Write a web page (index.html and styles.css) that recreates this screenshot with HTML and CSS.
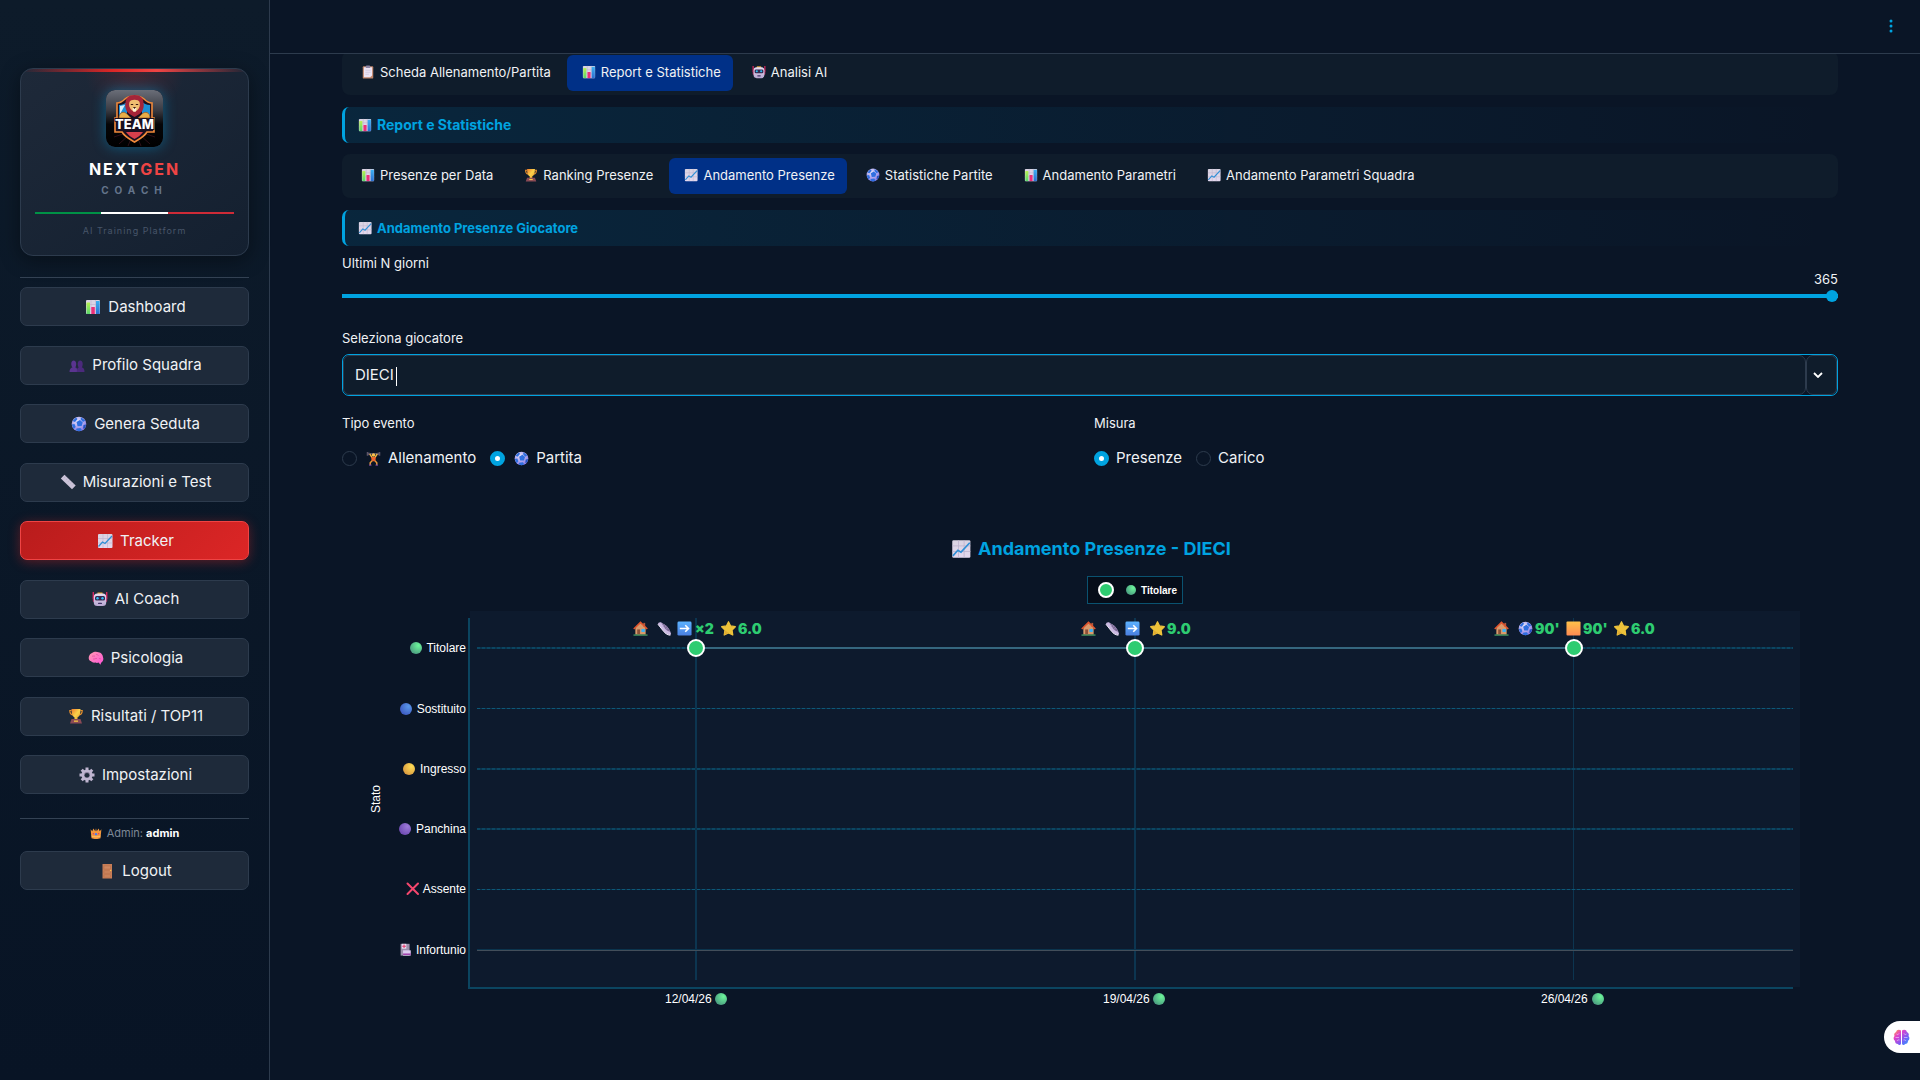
FILE: index.html
```html
<!DOCTYPE html>
<html lang="it">
<head>
    <meta charset="UTF-8">
    <meta name="viewport" content="width=device-width, initial-scale=1.0">
    <title>NextGen Coach - Tracker</title>
    <link rel="stylesheet" href="styles.css">
</head>
<body>

<!-- Icon sprite -->
<svg class="sprite" aria-hidden="true">
    <defs>
        <linearGradient id="g-green-bar" x1="0" y1="0" x2="0" y2="1"><stop offset="0" stop-color="#b6f24f"/><stop offset="1" stop-color="#57d66b"/></linearGradient>
        <linearGradient id="g-blue-bar" x1="0" y1="0" x2="0" y2="1"><stop offset="0" stop-color="#3ab0f2"/><stop offset="1" stop-color="#2c6fd0"/></linearGradient>
        <linearGradient id="g-paper" x1="0" y1="0" x2="0" y2="1"><stop offset="0" stop-color="#d9d3e2"/><stop offset="1" stop-color="#e4d8ee"/></linearGradient>
        <linearGradient id="g-gold" x1="0" y1="0" x2="1" y2="1"><stop offset="0" stop-color="#f07a2c"/><stop offset=".5" stop-color="#fad24a"/><stop offset="1" stop-color="#e8962e"/></linearGradient>
        <linearGradient id="g-orange" x1="0" y1="0" x2="0" y2="1"><stop offset="0" stop-color="#ffc24a"/><stop offset="1" stop-color="#ff8a52"/></linearGradient>
        <linearGradient id="g-arrow" x1="0" y1="0" x2="0" y2="1"><stop offset="0" stop-color="#5cb2ff"/><stop offset="1" stop-color="#4a7fe0"/></linearGradient>
        <linearGradient id="g-brain" x1="0" y1="0" x2="1" y2="1"><stop offset="0" stop-color="#ff9ab0"/><stop offset="1" stop-color="#ff52d8"/></linearGradient>
        <linearGradient id="g-ai" x1="0" y1="0" x2="1" y2="1"><stop offset="0" stop-color="#ffb02e"/><stop offset=".3" stop-color="#e640c8"/><stop offset=".65" stop-color="#7a5cf5"/><stop offset="1" stop-color="#22a6ff"/></linearGradient>
        <linearGradient id="g-head" x1="0" y1="0" x2="0" y2="1"><stop offset="0" stop-color="#e6dcf2"/><stop offset="1" stop-color="#b8a6d0"/></linearGradient>
        <radialGradient id="g-ball" cx=".4" cy=".3" r=".8"><stop offset="0" stop-color="#e4e2fa"/><stop offset="1" stop-color="#7c6ce0"/></radialGradient>
        <radialGradient id="g-dot-green" cx=".7" cy=".3" r=".8"><stop offset="0" stop-color="#6cf59a"/><stop offset="1" stop-color="#4a9a80"/></radialGradient>
        <radialGradient id="g-dot-blue" cx=".7" cy=".3" r=".8"><stop offset="0" stop-color="#5a98e8"/><stop offset="1" stop-color="#3c58c0"/></radialGradient>
        <radialGradient id="g-dot-yellow" cx=".7" cy=".3" r=".8"><stop offset="0" stop-color="#ffdc55"/><stop offset="1" stop-color="#d89840"/></radialGradient>
        <radialGradient id="g-dot-purple" cx=".7" cy=".3" r=".8"><stop offset="0" stop-color="#9c7ad8"/><stop offset="1" stop-color="#6c48b0"/></radialGradient>
    </defs>

    <symbol id="i-bars" viewBox="0 0 16 16">
        <rect x="1" y="1" width="14" height="14" rx="1" fill="url(#g-paper)"/>
        <path d="M1 5.5h14M1 10h14M6 1v14M10.5 1v14" stroke="#bcb2cc" stroke-width=".6"/>
        <rect x="1.5" y="3.5" width="3.5" height="11.5" fill="url(#g-green-bar)"/>
        <rect x="6.3" y="8" width="3.5" height="7" fill="#ec2f78"/>
        <rect x="11" y="2" width="3.7" height="13" fill="url(#g-blue-bar)"/>
    </symbol>
    <symbol id="i-trend" viewBox="0 0 16 16">
        <rect x="1" y="1" width="14.500" height="14" rx="1" fill="url(#g-paper)"/>
        <path d="M1 5.500h14.500M1 10h14.500M6 1v14M10.500 1v14" stroke="#bcb2cc" stroke-width=".6"/>
        <path d="M1.500 13.500L5.500 9l2.500 1.500 7-7.500" fill="none" stroke="#2f8fd6" stroke-width="1.300"/>
    </symbol>
    <symbol id="i-people" viewBox="0 0 16 16">
        <path d="M.5 15c0-3 1.500-4.500 3-4.500C1.500 8 2 3.500 4.700 3.500S8 8 6.300 10.500C8 10.500 8.200 12 8.200 15z" fill="#5a3490"/>
        <path d="M7.800 15c0-3 .7-4.500 2-4.500C8 8 8.500 3.500 11.200 3.500S14.500 8 12.800 10.500c1.700 0 2.700 1.500 2.700 4.500z" fill="#4b2a7c"/>
    </symbol>
    <symbol id="i-ball" viewBox="0 0 16 16">
        <circle cx="8" cy="8" r="7.300" fill="url(#g-ball)"/>
        <path d="M5.500 6l3.500-2 2.800 2.500-1.200 3.500-4 .2zM1.500 5L5 1.500l1.500 1.500L4 6zM10 1.200l4.300 3.300L12 6 9.700 3.500zM.8 8.500L3.500 8l1.200 3-2 2zM5.500 12.500l4-.5 1.500 2.300L8 15.300l-3-1z" fill="#2f6fe0"/>
        <path d="M12.500 9l2.600-.5-1 3.500-2.100.8z" fill="#2453c0"/>
    </symbol>
    <symbol id="i-ruler" viewBox="0 0 16 16">
        <path d="M.8 4.500L4.500.8 15.700 11.500 12 15.300z" fill="#cbc3d8"/>
        <path d="M5.500 2.500L4.300 3.700M7.500 4.500L6.300 5.700M9.500 6.400L8.300 7.600M11.500 8.300l-1.200 1.200M13.500 10.200l-1.200 1.200" stroke="#a79fb8" stroke-width=".6"/>
    </symbol>
    <symbol id="i-robot" viewBox="0 0 16 16">
        <path d="M1.300 1v7M14.700 1v7" stroke="#d8245e" stroke-width="1.400"/>
        <path d="M5.500 1.500h5v2h-5z" fill="#e8a832"/>
        <rect x="0.800" y="7" width="14.400" height="4" rx="1" fill="#b02c64"/>
        <rect x="1.800" y="2.500" width="12.400" height="12.500" rx="3.500" fill="url(#g-head)"/>
        <rect x="3" y="5" width="10" height="4.500" rx="1.500" fill="#35284e"/>
        <circle cx="5.500" cy="7.200" r="1.200" fill="#2ec0f5"/><circle cx="10.500" cy="7.200" r="1.200" fill="#2ec0f5"/>
        <rect x="6" y="11.700" width="4" height="1.300" rx=".6" fill="#45366a"/>
    </symbol>
    <symbol id="i-brain" viewBox="0 0 16 16">
        <path d="M1 9.500C.2 7 1.500 4 4 3c2-1.700 5-1.500 6.500-.7C13 2.500 15 5 15 7.300c.8 1.700.2 4-1.200 4.700-.5 1-1 1-1.300 2.800l-2-2.300c-1 .6-2.200.5-3 0C5.500 13 3 12 3 11 2 11 1.200 10.400 1 9.500z" fill="url(#g-brain)"/>
        <path d="M4 6.500c1-1 2 0 3-.5M8 4c.5 1 2 .5 2.500 1.500M5 9c1.500.5 2.500-1 4-.5M11 8c.5 1 1.500.5 2 1.200" fill="none" stroke="#e0489c" stroke-width=".7"/>
    </symbol>
    <symbol id="i-trophy" viewBox="0 0 16 16">
        <path d="M3.500 2.500H1.800c0 3 1 4 3 4.500M12.500 2.500h1.700c0 3-1 4-3 4.500" fill="none" stroke="#e8902c" stroke-width="1.200"/>
        <path d="M3.500 1h9c0 5-1 7.500-3 8.300V12h-3V9.300C4.500 8.500 3.500 6 3.500 1z" fill="url(#g-gold)"/>
        <path d="M3.500 11h9l1.500 4.500H2z" fill="#8a4a56"/>
        <rect x="6" y="12.500" width="4" height="1.300" fill="#f5c542"/>
    </symbol>
    <symbol id="i-gear" viewBox="0 0 16 16">
        <path d="M8 .5v15M.5 8h15M2.700 2.700l10.600 10.600M13.300 2.700L2.700 13.300" stroke="#bfb5d0" stroke-width="3"/>
        <circle cx="8" cy="8" r="5.600" fill="#bfb5d0"/>
        <circle cx="8" cy="8" r="3" fill="#8a7f9c"/>
        <circle cx="8" cy="8.200" r="2.300" fill="#1f2a3a"/>
    </symbol>
    <symbol id="i-crown" viewBox="0 0 16 16">
        <path d="M.8 3l2.200 2.500L4.500 2 7 5.500 8 1.500l1 4L11.500 2 13 5.500 15.200 3l-1.200 12c-3 1.200-9 1.200-12 0z" fill="#f5983c"/>
        <path d="M2 12c3 1.500 9 1.500 12 0" fill="none" stroke="#ffd27a"/>
        <circle cx="8" cy="9.500" r="1.600" fill="#4a78f0"/><circle cx="4.500" cy="9" r="1" fill="#e0386c"/><circle cx="11.500" cy="9" r="1" fill="#e0386c"/>
    </symbol>
    <symbol id="i-door" viewBox="0 0 16 16">
        <rect x="3.500" y="1" width="9.500" height="14.500" fill="#c87d56"/>
        <path d="M5 3h6.500v3H5zM5 8h6.500v2H5zM5 12h6.500v2H5z" fill="#d08860" stroke="#b56f4a" stroke-width=".5"/>
        <circle cx="11.600" cy="7.500" r=".8" fill="#f5c04a"/>
    </symbol>
    <symbol id="i-clipboard" viewBox="0 0 16 16">
        <rect x="2" y="1.500" width="12" height="14" rx="1" fill="#c08468"/>
        <path d="M3.300 2.500h9.400v9.500L10.500 14H3.300z" fill="#ece4f4"/>
        <rect x="5.500" y=".5" width="5" height="3" rx="1" fill="#8c84a4"/>
        <path d="M5 6h6M5 8.300h6M5 10.600h4" stroke="#c9c0d8" stroke-width=".8"/>
    </symbol>
    <symbol id="i-lifter" viewBox="0 0 16 16">
        <path d="M1 3h14" stroke="#8a8296" stroke-width=".9"/>
        <path d="M1.500 1v4M3 1.500v3M13 1.500v3M14.500 1v4" stroke="#5c5468" stroke-width="1.400"/>
        <path d="M4 3l2.500 4M12 3L9.500 7" stroke="#f5b942" stroke-width="1.500"/>
        <circle cx="8" cy="4.300" r="1.900" fill="#f7c04c"/>
        <path d="M5.500 6.500h5L10 11H6z" fill="#f0662c"/>
        <path d="M6.500 10.500L4.500 12.500V15M9.500 10.500l2 2V15" fill="none" stroke="#e89a3a" stroke-width="1.600"/>
        <path d="M3.300 15h2.500M10.200 15h2.500" stroke="#7a4aa0" stroke-width="1.200"/>
    </symbol>
    <symbol id="i-house" viewBox="0 0 16 16">
        <path d="M2.500 7L8 2l5.500 5v7.500h-11z" fill="#d99a6c"/>
        <path d="M11 2h2v4h-2z" fill="#b0583c"/>
        <path d="M.8 8.500L8 1.500l7.200 7" fill="none" stroke="#e0552e" stroke-width="1.700"/>
        <rect x="4.500" y="9" width="3" height="5.500" fill="#8c5038"/>
        <rect x="9" y="8.500" width="3.600" height="3.200" fill="#39b2f5"/>
        <path d="M.5 15h15" stroke="#4fae6a" stroke-width="1.200"/>
    </symbol>
    <symbol id="i-shoe" viewBox="0 0 16 16">
        <path d="M1 3.500C1 1.500 3 .8 4.500 1.500L9 4.500c3 2 5 6 6 9l-.8 1.700c-3-.3-5.200-1.700-7.200-4.200z" fill="#cbb9e2"/>
        <path d="M4.500 1.500L9 4.500c2.500 1.700 4.200 4.500 5.300 7-2.800-.5-4.800-2-6.300-4z" fill="#7c6a96"/>
        <path d="M6 5.500l2-1.500M7.500 7.200l2.200-1.600M9.200 9l2.200-1.600" stroke="#b5a5cc" stroke-width=".6"/>
        <path d="M1 3.500L7 11c2 2.500 4.200 3.900 7.200 4.200" fill="none" stroke="#f4effb" stroke-width="1"/>
    </symbol>
    <symbol id="i-arrow" viewBox="0 0 16 16">
        <rect x=".5" y=".5" width="15" height="15" rx="1.500" fill="url(#g-arrow)"/>
        <path d="M3 8h9M8.800 4.500L12.300 8l-3.500 3.500" fill="none" stroke="#fff" stroke-width="1.700"/>
    </symbol>
    <symbol id="i-star" viewBox="0 0 16 16">
        <path d="M8 .8l2.300 4.500 5 .8-3.500 3.700.8 5.200L8 12.800 3.400 15l.8-5.200L.7 6.100l5-.8z" fill="#edc23a" stroke="#edc23a" stroke-width="1.300" stroke-linejoin="round"/>
        <path d="M8 12.800L3.400 15l.8-5.200" fill="#e0ac32"/>
    </symbol>
    <symbol id="i-square" viewBox="0 0 16 16"><rect x=".5" y=".5" width="15" height="15" rx="1" fill="url(#g-orange)"/></symbol>
    <symbol id="i-hospital" viewBox="0 0 16 16">
        <rect x="2" y="1" width="11" height="14.500" fill="#9c90ac"/>
        <rect x="3.500" y="1" width="5.500" height="6" fill="#e8def2"/>
        <path d="M6.200 1.700v4.600M4 4h4.500" stroke="#e8386c" stroke-width="1.300"/>
        <rect x="5" y="9" width="9.500" height="6.500" fill="#dccbf0"/>
        <path d="M5 13.800h9.500" stroke="#a03ca8" stroke-width="1.800"/>
    </symbol>
</svg>

<div class="app">
    <aside class="sidebar">
        <div class="brand">
            <svg class="brand-logo" viewBox="0 0 57 57" role="img" aria-label="Team">
                <defs>
                    <linearGradient id="g-logo" x1="0" y1="0" x2="0" y2="1"><stop offset="0" stop-color="#6a6e78"/><stop offset=".35" stop-color="#3a3c44"/><stop offset=".6" stop-color="#060608"/><stop offset="1" stop-color="#000"/></linearGradient>
                </defs>
                <rect width="57" height="57" rx="9" fill="url(#g-logo)"/>
                <path d="M28.500 40L8 47M28.500 40L13 54M28.500 40L22 56M28.500 40L49 47M28.500 40L44 54M28.500 40L35 56" stroke="#3a1420" stroke-width=".8"/>
                <path d="M11 13c4 0 6-2 8-4 5-4 14-4 19 0 2 2 4 4 8 4v15h2v14h-7c-3 5-8 7-12.500 10C24 49 19 47 16 42H9V28h2z" fill="#1a1020" stroke="#f08a3a" stroke-width="1.600"/>
                <path d="M13 15c4 0 6-2 8-3v15h-8z" fill="#1d8fd6"/>
                <path d="M44 15c-4 0-6-2-8-3v15h8z" fill="#1d8fd6"/>
                <path d="M14 16l5-1-5 9z" fill="#d8eefa"/>
                <path d="M13 28c0-6 5-7 8-4l4 4zM44 28c0-6-5-7-8-4l-4 4z" fill="#e8ae48" stroke="#8c5020" stroke-width=".7"/>
                <path d="M28.500 5c6 0 9 3 9 8 1 4-1 9-4 11l-5 3-5-3c-3-2-5-7-4-11 0-5 3-8 9-8z" fill="#a52438"/>
                <path d="M23.500 12c1-3 9-3 10 0 1 3 0 6-2 8l-3 2-3-2c-2-2-3-5-2-8z" fill="#f0be70"/>
                <path d="M26.500 18.500c1-1 3-1 4 0l-.5 3h-3z" fill="#fff0d8"/>
                <path d="M24.800 14.500h2.400M29.800 14.500h2.400" stroke="#3a1a10" stroke-width="1.200"/>
                <path d="M27 17h3l-1.500 2z" fill="#3a1a10"/>
                <path d="M20 42h17c-2 3-5 5-8.500 7-3.500-2-6.500-4-8.500-7z" fill="#d8404c"/>
                <text class="brand-logo-text" x="28.500" y="39" text-anchor="middle">TEAM</text>
            </svg>
            <div class="brand-name">NEXT<span>GEN</span></div>
            <div class="brand-sub">COACH</div>
            <div class="tricolore"><i></i><i></i><i></i></div>
            <div class="brand-tag">AI Training Platform</div>
        </div>

        <hr class="divider">

        <nav class="side-nav">
            <button class="side-btn"><svg class="icon"><use href="#i-bars"/></svg>Dashboard</button>
            <button class="side-btn"><svg class="icon"><use href="#i-people"/></svg>Profilo Squadra</button>
            <button class="side-btn"><svg class="icon"><use href="#i-ball"/></svg>Genera Seduta</button>
            <button class="side-btn"><svg class="icon"><use href="#i-ruler"/></svg>Misurazioni e Test</button>
            <button class="side-btn active"><svg class="icon"><use href="#i-trend"/></svg>Tracker</button>
            <button class="side-btn"><svg class="icon"><use href="#i-robot"/></svg>AI Coach</button>
            <button class="side-btn"><svg class="icon"><use href="#i-brain"/></svg>Psicologia</button>
            <button class="side-btn"><svg class="icon"><use href="#i-trophy"/></svg>Risultati / TOP11</button>
            <button class="side-btn"><svg class="icon"><use href="#i-gear"/></svg>Impostazioni</button>
        </nav>

        <hr class="divider divider-user">
        <div class="user"><svg class="icon icon-small"><use href="#i-crown"/></svg><span>Admin: <b>admin</b></span></div>
        <button class="side-btn"><svg class="icon"><use href="#i-door"/></svg>Logout</button>
    </aside>

    <main class="main">
        <header class="topbar">
            <button class="menu-btn" aria-label="Menu">
                <svg width="4" height="14" viewBox="0 0 4 14" fill="#00a3e0"><circle cx="2" cy="2" r="1.500"/><circle cx="2" cy="7" r="1.500"/><circle cx="2" cy="12" r="1.500"/></svg>
            </button>
        </header>

        <div class="content">
            <div class="tabs" role="tablist">
                <button class="tab" role="tab"><svg class="icon"><use href="#i-clipboard"/></svg>Scheda Allenamento/Partita</button>
                <button class="tab active" role="tab" aria-selected="true"><svg class="icon"><use href="#i-bars"/></svg>Report e Statistiche</button>
                <button class="tab" role="tab"><svg class="icon"><use href="#i-robot"/></svg>Analisi AI</button>
            </div>

            <h2 class="section-title"><svg class="icon"><use href="#i-bars"/></svg>Report e Statistiche</h2>

            <div class="tabs" role="tablist">
                <button class="tab" role="tab"><svg class="icon"><use href="#i-bars"/></svg>Presenze per Data</button>
                <button class="tab" role="tab"><svg class="icon"><use href="#i-trophy"/></svg>Ranking Presenze</button>
                <button class="tab active" role="tab" aria-selected="true"><svg class="icon"><use href="#i-trend"/></svg>Andamento Presenze</button>
                <button class="tab" role="tab"><svg class="icon"><use href="#i-ball"/></svg>Statistiche Partite</button>
                <button class="tab" role="tab"><svg class="icon"><use href="#i-bars"/></svg>Andamento Parametri</button>
                <button class="tab" role="tab"><svg class="icon"><use href="#i-trend"/></svg>Andamento Parametri Squadra</button>
            </div>

            <h3 class="section-title section-title-small"><svg class="icon"><use href="#i-trend"/></svg>Andamento Presenze Giocatore</h3>

            <div class="field-slider">
                <label class="label" for="days">Ultimi N giorni</label>
                <output class="slider-value" for="days">365</output>
                <input class="slider" type="range" id="days" min="7" max="365" value="365">
            </div>

            <div class="field-select">
                <label class="label" for="player">Seleziona giocatore</label>
                <div class="combo">
                    <input class="combo-input" type="text" id="player" role="combobox" aria-expanded="false" value="DIECI">
                    <span class="caret"></span>
                    <button class="combo-toggle" aria-label="Apri elenco">
                        <svg width="10" height="6" viewBox="0 0 10 6"><path d="M1 1l4 4 4-4" fill="none" stroke="#fff" stroke-width="1.800"/></svg>
                    </button>
                </div>
            </div>

            <div class="filters">
                <fieldset class="radio-group">
                    <legend class="label">Tipo evento</legend>
                    <label class="radio"><input type="radio" name="evento"><svg class="icon"><use href="#i-lifter"/></svg>Allenamento</label>
                    <label class="radio"><input type="radio" name="evento" checked><svg class="icon"><use href="#i-ball"/></svg>Partita</label>
                </fieldset>
                <fieldset class="radio-group">
                    <legend class="label">Misura</legend>
                    <label class="radio"><input type="radio" name="misura" checked>Presenze</label>
                    <label class="radio"><input type="radio" name="misura">Carico</label>
                </fieldset>
            </div>

            <svg class="chart" viewBox="0 0 1496 540" role="img" aria-label="Andamento Presenze - DIECI">
                <use href="#i-trend" x="609" y="39" width="20" height="20"/>
                <text class="chart-title" x="636" y="55">Andamento Presenze - DIECI</text>

                <!-- Legend -->
                <rect class="legend-box" x="745.500" y="76.500" width="95" height="27"/>
                <circle class="marker" cx="764" cy="90" r="7"/>
                <circle cx="789" cy="90" r="5" fill="url(#g-dot-green)"/>
                <text class="legend-text" x="799" y="94">Titolare</text>

                <!-- Plot area and grid -->
                <rect class="plot-bg" x="128" y="111" width="1330" height="376"/>
                <path class="grid-v" d="M354 118v362M793 118v362"/>
                <path class="grid-v thin" d="M1231.500 118v362"/>
                <path class="grid-h" d="M135 148h1316M135 269h1316M135 329h1316M135 450h1316"/>
                <path class="grid-h thin" d="M135 208.500h1316M135 389.500h1316"/>
                <path class="grid-dash" d="M135 148h1316M135 208.500h1316M135 269h1316M135 329h1316M135 389.500h1316"/>
                <path class="zero-line" d="M135 450.500h1316"/>
                <path class="axis" d="M127 118v370h1324"/>

                <!-- Data -->
                <path class="series" d="M354 148h877"/>
                <circle class="marker" cx="354" cy="148" r="8"/>
                <circle class="marker" cx="793" cy="148" r="8"/>
                <circle class="marker" cx="1232" cy="148" r="8"/>

                <g class="point-text">
                    <use href="#i-house" x="291" y="121" width="15" height="15"/>
                    <use href="#i-shoe" x="315" y="121" width="15" height="15"/>
                    <use href="#i-arrow" x="335" y="121" width="15" height="15"/>
                    <text x="353" y="134">×2</text>
                    <use href="#i-star" x="379" y="121" width="15" height="15"/>
                    <text x="396" y="134">6.0</text>

                    <use href="#i-house" x="739" y="121" width="15" height="15"/>
                    <use href="#i-shoe" x="763" y="121" width="15" height="15"/>
                    <use href="#i-arrow" x="783" y="121" width="15" height="15"/>
                    <use href="#i-star" x="808" y="121" width="15" height="15"/>
                    <text x="825" y="134">9.0</text>

                    <use href="#i-house" x="1152" y="121" width="15" height="15"/>
                    <use href="#i-ball" x="1176" y="121" width="15" height="15"/>
                    <text x="1193" y="134">90'</text>
                    <use href="#i-square" x="1224" y="121" width="15" height="15"/>
                    <text x="1241" y="134">90'</text>
                    <use href="#i-star" x="1272" y="121" width="15" height="15"/>
                    <text x="1289" y="134">6.0</text>
                </g>

                <!-- Y axis -->
                <text class="axis-title" transform="translate(38 299) rotate(-90)">Stato</text>
                <g class="tick tick-y">
                    <circle cx="74" cy="148" r="6" fill="url(#g-dot-green)"/><text x="124" y="152">Titolare</text>
                    <circle cx="64" cy="209" r="6" fill="url(#g-dot-blue)"/><text x="124" y="213">Sostituito</text>
                    <circle cx="67" cy="269" r="6" fill="url(#g-dot-yellow)"/><text x="124" y="273">Ingresso</text>
                    <circle cx="63" cy="329" r="6" fill="url(#g-dot-purple)"/><text x="124" y="333">Panchina</text>
                    <path class="cross" d="M65.500 383.500l10.500 10.500M76 383.500L65.500 394"/><text x="124" y="393">Assente</text>
                    <use href="#i-hospital" x="57" y="443" width="13" height="13"/><text x="124" y="454">Infortunio</text>
                </g>

                <!-- X axis -->
                <g class="tick">
                    <text x="323" y="503">12/04/26</text><circle cx="379" cy="499" r="6" fill="url(#g-dot-green)"/>
                    <text x="761" y="503">19/04/26</text><circle cx="817" cy="499" r="6" fill="url(#g-dot-green)"/>
                    <text x="1199" y="503">26/04/26</text><circle cx="1256" cy="499" r="6" fill="url(#g-dot-green)"/>
                </g>
            </svg>
        </div>
    </main>
</div>

<button class="ai-btn" aria-label="Assistente AI">
    <svg width="17" height="17" viewBox="0 0 17 17">
        <path d="M8 1.500C6 0 3.300 1 3.200 3 1.300 3.500.7 5.500 1.500 7 0 8.500.5 11 2 11.700c-.2 2 1.300 3.300 2.800 3.300C6 16.700 8 16 8 14.500zM9 1.500c2-1.500 4.700-.5 4.800 1.500 1.900.5 2.500 2.500 1.700 4 1.500 1.500 1 4-.5 4.700.2 2-1.300 3.300-2.800 3.300C11 16.700 9 16 9 14.500z" fill="url(#g-ai)"/>
        <path d="M3.500 5c1 1 2 .5 2.500-.5M2.500 8.500H6M4 12c.5-1 1.500-1.300 2.500-1M13.500 5c-1 1-2 .5-2.500-.5M14.500 8.500H11M13 12c-.5-1-1.500-1.300-2.500-1" fill="none" stroke="#fff" stroke-opacity=".6" stroke-width=".8"/>
    </svg>
</button>

</body>
</html>
```
FILE: styles.css
```css
:root {
    --bg: #0a1526;
    --surface: #0f1c2b;
    --button: #1e2a3a;
    --border: #2d3b4d;
    --text: #f0f2f5;
    --accent: #00a3e0;
    --primary: #003087;
    --red: #dc2626;
}

* {
    box-sizing: border-box;
}

body {
    margin: 0;
    font-family: Inter, "Liberation Sans", sans-serif;
    background-color: var(--bg);
    color: var(--text);
}

button,
input {
    font-family: inherit;
    color: inherit;
}

button {
    cursor: pointer;
}

.sprite {
    position: absolute;
    width: 0;
    height: 0;
}

.icon {
    width: 16px;
    height: 16px;
    flex-shrink: 0;
}

.icon-small {
    width: 12px;
    height: 12px;
}

.app {
    display: flex;
    min-height: 100vh;
}

/* Sidebar */
.sidebar {
    width: 270px;
    flex-shrink: 0;
    padding: 68px 20px 20px;
    border-right: 1px solid var(--border);
    background: linear-gradient(180deg, #0d1b2a 0%, #081425 100%);
}

.brand {
    position: relative;
    display: flex;
    flex-direction: column;
    align-items: center;
    padding: 21px 14px 18px;
    border: 1px solid var(--border);
    border-radius: 13px;
    overflow: hidden;
    background: radial-gradient(circle at 50% 0, rgba(220, 38, 38, 0.2), transparent 50px), linear-gradient(145deg, #1e2939, #142030);
    box-shadow: 0 4px 20px rgba(0, 0, 0, 0.4);
}

.brand::before {
    content: "";
    position: absolute;
    top: 0;
    left: 0;
    right: 0;
    height: 3px;
    background: linear-gradient(90deg, transparent, var(--red) 40%, #ef4444 60%, transparent);
}

.brand-logo {
    width: 57px;
    height: 57px;
    border-radius: 9px;
    box-shadow: 0 0 14px rgba(0, 163, 224, 0.45);
}

.brand-logo-text {
    font-size: 13px;
    font-weight: 800;
    fill: #fff;
    stroke: #1a1020;
    stroke-width: 2px;
    paint-order: stroke;
}

.brand-name {
    margin-top: 12px;
    font-size: 16px;
    line-height: 20px;
    font-weight: 700;
    letter-spacing: 2px;
    color: #fff;
}

.brand-name span {
    color: #ef4444;
}

.brand-sub {
    margin-top: 5px;
    font-size: 10px;
    line-height: 12px;
    font-weight: 700;
    letter-spacing: 6px;
    color: #64748b;
}

.tricolore {
    display: flex;
    align-self: stretch;
    height: 2px;
    margin-top: 16px;
}

.tricolore i {
    flex: 1;
    background-color: #fff;
}

.tricolore i:first-child {
    background-color: #009246;
}

.tricolore i:last-child {
    background-color: #ce2b37;
}

.brand-tag {
    margin-top: 11px;
    font-size: 9px;
    line-height: 12px;
    letter-spacing: 1px;
    color: #475569;
}

.divider {
    margin: 21px 0 9px;
    border: 0;
    border-top: 1px solid #344254;
}

.divider-user {
    margin: 24px 0 7px;
}

.side-nav {
    display: flex;
    flex-direction: column;
    justify-content: space-between;
    min-height: 507px;
}

.side-btn {
    display: flex;
    align-items: center;
    justify-content: center;
    gap: 7px;
    width: 100%;
    min-height: 39px;
    padding: 8px 10px 8px 12px;
    border: 1px solid var(--border);
    border-radius: 7px;
    background-color: var(--button);
    font-size: 15px;
    line-height: 20px;
}

.side-btn.active {
    border-color: #ef4444;
    background: linear-gradient(135deg, #b91c1c, var(--red));
    box-shadow: 0 2px 12px rgba(220, 38, 38, 0.4);
}

.user {
    display: flex;
    align-items: center;
    justify-content: center;
    gap: 5px;
    margin-bottom: 11px;
    font-size: 11px;
    line-height: 14px;
    color: #7d8896;
}

.user b {
    color: #fff;
    font-weight: 700;
}

/* Main */
.main {
    flex: 1;
    min-width: 0;
}

.topbar {
    position: sticky;
    top: 0;
    z-index: 1;
    display: flex;
    align-items: center;
    justify-content: flex-end;
    height: 54px;
    padding: 0 20px;
    border-bottom: 1px solid var(--border);
    background-color: var(--bg);
}

.menu-btn {
    display: flex;
    padding: 3px 7px 5px;
    border: 0;
    background: none;
}

.content {
    margin-top: -3px;
    padding: 0 82px 0 72px;
}

.tabs {
    display: flex;
    gap: 4px;
    padding: 4px;
    border-radius: 8px;
    background-color: var(--surface);
}

.tab {
    display: flex;
    align-items: center;
    gap: 5px;
    padding: 7px 12px 9px 15px;
    border: 0;
    border-radius: 6px;
    background: none;
    font-size: 13px;
    line-height: 20px;
}

.tab.active {
    background-color: var(--primary);
}

.tab .icon,
.section-title .icon {
    width: 14px;
    height: 14px;
}

.section-title {
    display: flex;
    align-items: center;
    gap: 5px;
    margin: 12px 0 11px;
    padding: 8px 13px;
    border-left: 3px solid var(--accent);
    border-radius: 7px;
    background: linear-gradient(90deg, rgba(0, 163, 224, 0.12), transparent);
    font-size: 14px;
    line-height: 20px;
    font-weight: 700;
    color: var(--accent);
}

.section-title-small {
    font-size: 13px;
}

.label {
    display: block;
    padding: 0;
    font-size: 13px;
    line-height: 18px;
}

.field-slider {
    display: flex;
    flex-direction: column;
    margin-top: -3px;
}

.slider-value {
    align-self: flex-end;
    font-size: 13px;
    line-height: 14px;
}

.slider {
    width: 100%;
    height: 12px;
    margin: 4px 0 0;
    appearance: none;
    background: linear-gradient(var(--accent), var(--accent)) center / 100% 4px no-repeat;
    border-radius: 2px;
}

.slider::-webkit-slider-thumb {
    appearance: none;
    width: 12px;
    height: 12px;
    border-radius: 50%;
    background-color: var(--accent);
}

.field-select {
    margin-top: 27px;
}

.combo {
    position: relative;
    display: flex;
    height: 42px;
    margin-top: 7px;
    border: 1px solid var(--accent);
    border-radius: 7px;
    overflow: hidden;
}

.combo-input {
    flex: 1;
    min-width: 0;
    padding: 0 11px 2px;
    border: 1px solid var(--border);
    border-radius: 7px;
    outline: none;
    background-color: var(--surface);
    font-size: 15px;
}

.caret {
    position: absolute;
    top: 12px;
    left: 53px;
    width: 1px;
    height: 19px;
    background-color: #fff;
}

.combo-toggle {
    display: flex;
    align-items: center;
    width: 31px;
    padding: 0 6px;
    border: 1px solid var(--border);
    border-radius: 7px;
    background-color: var(--surface);
}

.filters {
    display: grid;
    grid-template-columns: 1fr 1fr;
    gap: 8px;
    margin-top: 18px;
}

.radio-group {
    display: flex;
    gap: 14px;
    min-width: 0;
    margin: 0;
    padding: 0;
    border: 0;
}

.radio-group .label {
    margin-bottom: 16px;
}

.radio {
    display: flex;
    align-items: center;
    gap: 7px;
    font-size: 15px;
    line-height: 20px;
}

.radio .icon {
    width: 15px;
    height: 15px;
    margin-left: 2px;
}

.radio input {
    appearance: none;
    width: 15px;
    height: 15px;
    margin: 0;
    border: 1px solid var(--border);
    border-radius: 50%;
}

.radio input:checked {
    border: 5px solid var(--accent);
    background-color: #fff;
}

/* Chart */
.chart {
    display: block;
    width: 100%;
    margin-top: 32px;
}

.chart-title {
    font-size: 18px;
    font-weight: 700;
    fill: var(--accent);
}

.legend-box {
    fill: #060d19;
    stroke: #0a5270;
}

.legend-text,
.tick,
.axis-title {
    font-family: "Liberation Sans", sans-serif;
    font-size: 12px;
    fill: #fff;
}

.legend-text {
    font-size: 10px;
    font-weight: 700;
}

.tick-y {
    text-anchor: end;
}

.axis-title {
    text-anchor: middle;
}

.plot-bg {
    fill: #0d1a2d;
}

.grid-v {
    fill: none;
    stroke: #0c3550;
    stroke-width: 2px;
}

.grid-h {
    stroke: #0b344d;
    stroke-width: 2px;
}

.grid-v.thin,
.grid-h.thin {
    stroke-width: 1px;
}

.grid-dash {
    stroke: #0d5878;
    stroke-width: 1px;
    stroke-dasharray: 3 2;
}

.zero-line {
    stroke: #5a5a60;
    stroke-width: 1px;
    stroke-opacity: 0.7;
}

.axis {
    fill: none;
    stroke: #0b4560;
    stroke-width: 2px;
}

.series {
    stroke: #35677f;
    stroke-width: 2px;
}

.marker {
    fill: #2ecc71;
    stroke: #fff;
    stroke-width: 2px;
}

.point-text {
    font-size: 14px;
    font-weight: 900;
    fill: #2ecc71;
}

.cross {
    stroke: #f5476e;
    stroke-width: 2px;
    stroke-linecap: round;
}

/* Floating assistant button */
.ai-btn {
    position: fixed;
    right: 0;
    bottom: 27px;
    z-index: 2;
    display: flex;
    align-items: center;
    width: 36px;
    height: 32px;
    padding: 0 0 0 9px;
    border: 0;
    border-radius: 16px 0 0 16px;
    background-color: #fff;
}
```
